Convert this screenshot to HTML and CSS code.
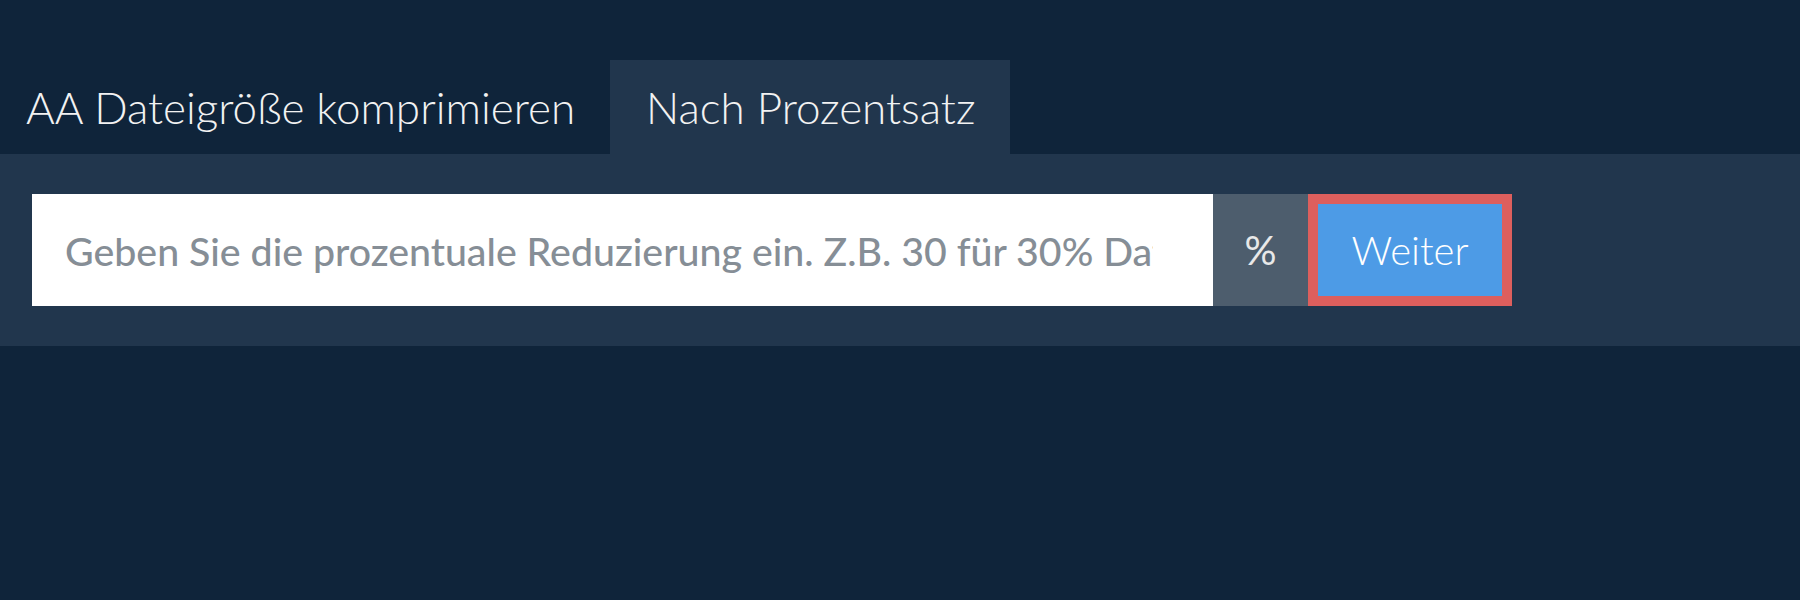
FILE: index.html
```html
<!DOCTYPE html>
<html lang="de">
<head>
    <meta charset="UTF-8">
    <title>Nach Prozentsatz</title>
    <link rel="stylesheet" href="styles.css">
</head>
<body>
    <div class="tabs">
        <div class="tab">AA Dateigröße komprimieren</div>
        <div class="tab active">Nach Prozentsatz</div>
    </div>

    <div class="panel">
        <div class="input-group">
            <input type="text" id="percent" placeholder="Geben Sie die prozentuale Reduzierung ein. Z.B. 30 für 30% Datei">
            <span class="addon">%</span>
            <button class="btn-next">Weiter</button>
        </div>
    </div>
</body>
</html>
```

FILE: styles.css
```css
body {
    margin: 0;
    padding-top: 60px;
    font-family: Lato, "Liberation Sans", sans-serif;
    background-color: #0f243a;
}

.tabs {
    display: flex;
}

.tab {
    height: 94px;
    line-height: 94px;
    padding: 0 35px 0 36px;
    font-size: 44px;
    font-weight: 300;
    color: #f2f2f2;
}

.tab:first-child {
    padding-left: 26px;
}

.tab.active {
    background-color: #21364d;
}

.panel {
    background-color: #21364d;
    padding: 40px 32px;
}

.input-group {
    display: flex;
    height: 112px;
}

.input-group input {
    width: 1181px;
    box-sizing: border-box;
    border: none;
    outline: none;
    margin: 0;
    padding: 0 60px 0 33px;
    font-family: Lato, "Liberation Sans", sans-serif;
    font-size: 39.3px;
    font-weight: 500;
    color: #333;
    background: white;
}

.input-group input::placeholder {
    color: #868e96;
}

.addon {
    width: 95px;
    display: flex;
    align-items: center;
    justify-content: center;
    background-color: #4d5d6d;
    color: #e8e8e8;
    font-size: 40px;
}

.btn-next {
    width: 204px;
    box-sizing: border-box;
    border: 10px solid #dd5f5d;
    background-color: #4d9be6;
    color: white;
    font-family: Lato, "Liberation Sans", sans-serif;
    font-size: 40px;
    font-weight: 300;
    padding: 0;
    cursor: pointer;
}
```
